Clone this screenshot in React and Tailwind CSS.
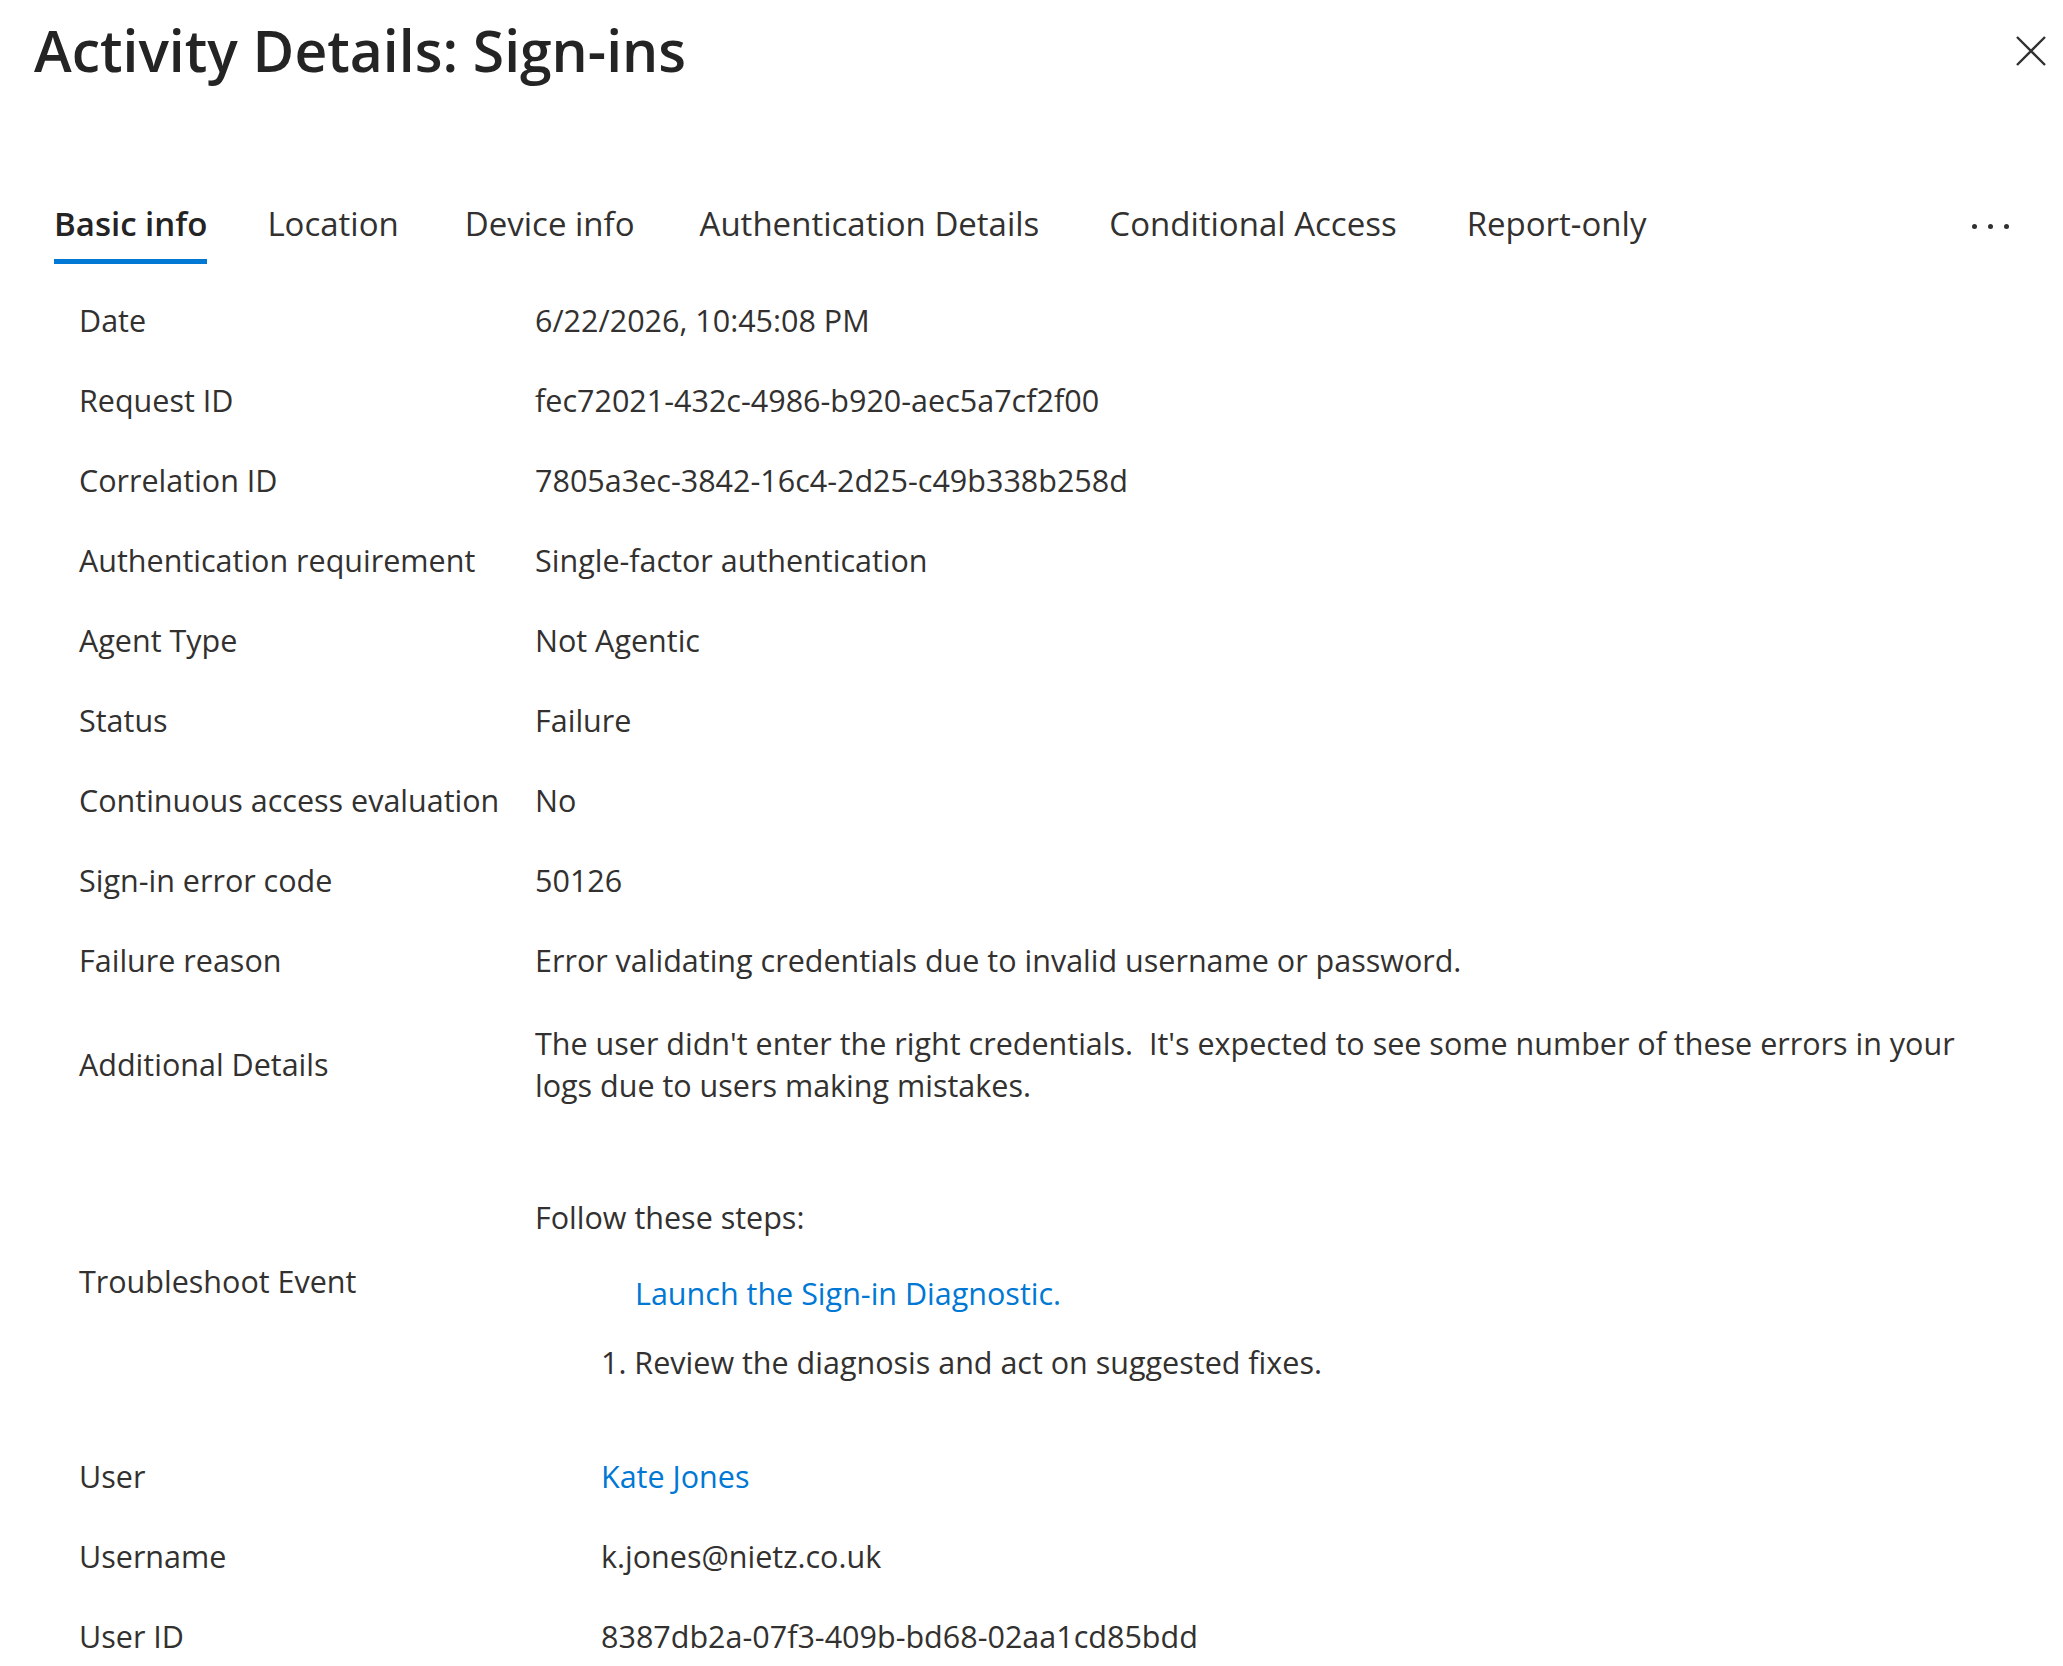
import { useState } from 'react'

const tabs = [
    ['Basic info', ''],
    ['Location', 'ml-[60px]'],
    ['Device info', 'ml-[66px]'],
    ['Authentication Details', 'ml-[65px]'],
    ['Conditional Access', 'ml-[70px]'],
    ['Report-only', 'ml-[70px]'],
]

const rows = [
    ['Date', '6/22/2026, 10:45:08 PM'],
    ['Request ID', 'fec72021-432c-4986-b920-aec5a7cf2f00'],
    ['Correlation ID', '7805a3ec-3842-16c4-2d25-c49b338b258d'],
    ['Authentication requirement', 'Single-factor authentication'],
    ['Agent Type', 'Not Agentic'],
    ['Status', 'Failure'],
    ['Continuous access evaluation', 'No'],
    ['Sign-in error code', '50126'],
    ['Failure reason', 'Error validating credentials due to invalid username or password.'],
]

function Row({ label, children, indent }) {
    return (
        <div className="grid grid-cols-[456px_1fr] items-center py-[19px]">
            <div>{label}</div>
            <div className={indent ? 'pl-[66px]' : ''}>{children}</div>
        </div>
    )
}

export default function App() {
    const [active, setActive] = useState(0)

    return (
        <div className="min-h-screen bg-white text-[#323130] font-['Open_Sans',sans-serif]">
            <div className="flex items-start justify-between pl-[34px] pr-[17px] pt-[14px]">
                <h1 className="text-[57px] font-semibold leading-[72px] text-[#242424]">Activity Details: Sign-ins</h1>
                <button className="mt-[22px] p-0 text-[#323130]" aria-label="Close">
                    <svg width="30" height="30" viewBox="0 0 30 30" fill="none" stroke="currentColor" strokeWidth="2.4">
                        <path d="M1 1L29 29M29 1L1 29" />
                    </svg>
                </button>
            </div>

            <div className="mt-[117px] flex items-end pl-[54px] pr-[54px]">
                <div className="flex">
                    {tabs.map(([t, gap], i) => (
                        <button
                            key={t}
                            onClick={() => setActive(i)}
                            className={
                                gap + ' border-b-[5px] pb-[14px] text-[33px] leading-[42px] ' +
                                (i === active ? 'border-[#0078d4] font-semibold text-[#242424]' : 'border-transparent text-[#323130]')
                            }
                        >
                            {t}
                        </button>
                    ))}
                </div>
                <div className="ml-auto flex gap-[11px] pb-[35px]">
                    <span className="h-[5px] w-[5px] rounded-full bg-[#323130]" />
                    <span className="h-[5px] w-[5px] rounded-full bg-[#323130]" />
                    <span className="h-[5px] w-[5px] rounded-full bg-[#323130]" />
                </div>
            </div>

            <div className="mt-[16px] pl-[79px] pr-[40px] text-[30.5px] leading-[42px]">
                {rows.map(([l, v]) => (
                    <Row key={l} label={l}>{v}</Row>
                ))}

                <div className="grid grid-cols-[456px_1fr] items-center pt-[22px] pb-[19px]">
                    <div>Additional Details</div>
                    <div>
                        The user didn't enter the right credentials.&nbsp; It's expected to see some number of these errors in your
                        <br />
                        logs due to users making mistakes.
                    </div>
                </div>

                <div className="grid grid-cols-[456px_1fr] items-center py-[20px]">
                    <div>Troubleshoot Event</div>
                    <div className="pt-[51px] pb-[33px]">
                        <div>Follow these steps:</div>
                        <div className="mt-[34px] pl-[100px]">
                            <a href="#" className="text-[#0078d4]">Launch the Sign-in Diagnostic.</a>
                        </div>
                        <div className="mt-[27px] pl-[66px]">1. Review the diagnosis and act on suggested fixes.</div>
                    </div>
                </div>

                <Row label="User" indent>
                    <a href="#" className="text-[#0078d4]">Kate Jones</a>
                </Row>
                <Row label="Username" indent>k.jones@nietz.co.uk</Row>
                <Row label="User ID" indent>8387db2a-07f3-409b-bd68-02aa1cd85bdd</Row>
            </div>
        </div>
    )
}
